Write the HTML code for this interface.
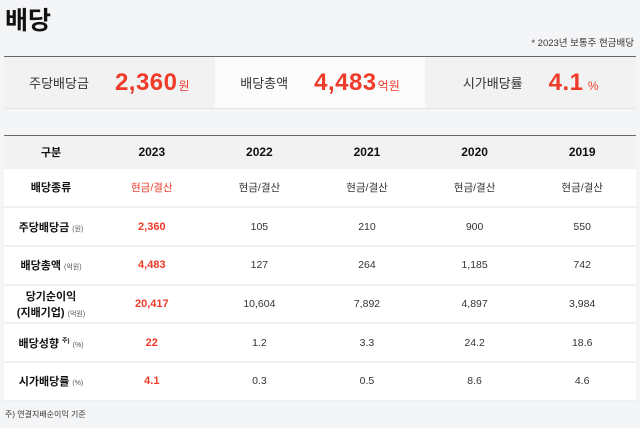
<!DOCTYPE html>
<html><head><meta charset="utf-8"><style>
*{margin:0;padding:0;box-sizing:border-box}
body{width:640px;height:428px;background:#f4f5f7;font-family:"Liberation Sans","Noto Sans CJK KR",sans-serif;color:#222;position:relative;overflow:hidden}
h1{position:absolute;left:5px;top:1px;font-size:25px;font-weight:bold;color:#111}
.note{position:absolute;right:6px;top:35px;font-size:9.5px;color:#333}
.sum{position:absolute;left:4px;top:56px;width:632px;height:53px;border-top:1px solid #666;border-bottom:1px solid #e6e6e6;display:flex}
.sum div{flex:1;display:flex;align-items:center;justify-content:center;background:#f2f2f2}
.sum div:nth-child(2){background:#fcfcfc}
.sum .l{font-size:13px;color:#333;margin-right:26px}
.sum .v{font-size:24px;font-weight:bold;color:#ee3b2a;letter-spacing:0.5px}
.sum .u{font-size:12px;color:#ee3b2a;margin-left:1px;margin-top:6px}
table{position:absolute;left:4px;top:135px;width:632px;border-collapse:collapse;border-top:1px solid #666}
td{text-align:center;font-size:10.5px;color:#333;background:#fff;border-bottom:2px solid #eef0f2;height:38.7px}
tr.h td{background:#f2f2f2;font-weight:bold;color:#111;font-size:12px;height:33px;border-bottom:0}
td.f{font-weight:bold;color:#111;width:94px;font-size:11px}
td.r{color:#ee3b2a;font-weight:bold;font-size:11px}
td.r2{color:#ee3b2a}
small{font-size:7px;color:#555;font-weight:normal}
.foot{position:absolute;left:5px;top:409px;font-size:8px;color:#333}
</style></head><body>
<h1>배당</h1>
<div class="note">* 2023년 보통주 현금배당</div>
<div class="sum">
<div><span class="l">주당배당금</span><span class="v">2,360</span><span class="u">원</span></div>
<div><span class="l">배당총액</span><span class="v">4,483</span><span class="u">억원</span></div>
<div><span class="l">시가배당률</span><span class="v">4.1</span><span class="u">&nbsp;%</span></div>
</div>
<table>
<tr class="h"><td class="f" style="font-size:11px">구분</td><td>2023</td><td>2022</td><td>2021</td><td>2020</td><td>2019</td></tr>
<tr><td class="f">배당종류</td><td class="r2">현금/결산</td><td>현금/결산</td><td>현금/결산</td><td>현금/결산</td><td>현금/결산</td></tr>
<tr><td class="f">주당배당금 <small>(원)</small></td><td class="r">2,360</td><td>105</td><td>210</td><td>900</td><td>550</td></tr>
<tr><td class="f">배당총액 <small>(억원)</small></td><td class="r">4,483</td><td>127</td><td>264</td><td>1,185</td><td>742</td></tr>
<tr><td class="f">당기순이익<br>(지배기업) <small>(억원)</small></td><td class="r">20,417</td><td>10,604</td><td>7,892</td><td>4,897</td><td>3,984</td></tr>
<tr><td class="f">배당성향 <sup style="font-size:6px">주)</sup> <small>(%)</small></td><td class="r">22</td><td>1.2</td><td>3.3</td><td>24.2</td><td>18.6</td></tr>
<tr><td class="f">시가배당률 <small>(%)</small></td><td class="r">4.1</td><td>0.3</td><td>0.5</td><td>8.6</td><td>4.6</td></tr>
</table>
<div class="foot">주) 연결지배순이익 기준</div>
</body></html>
